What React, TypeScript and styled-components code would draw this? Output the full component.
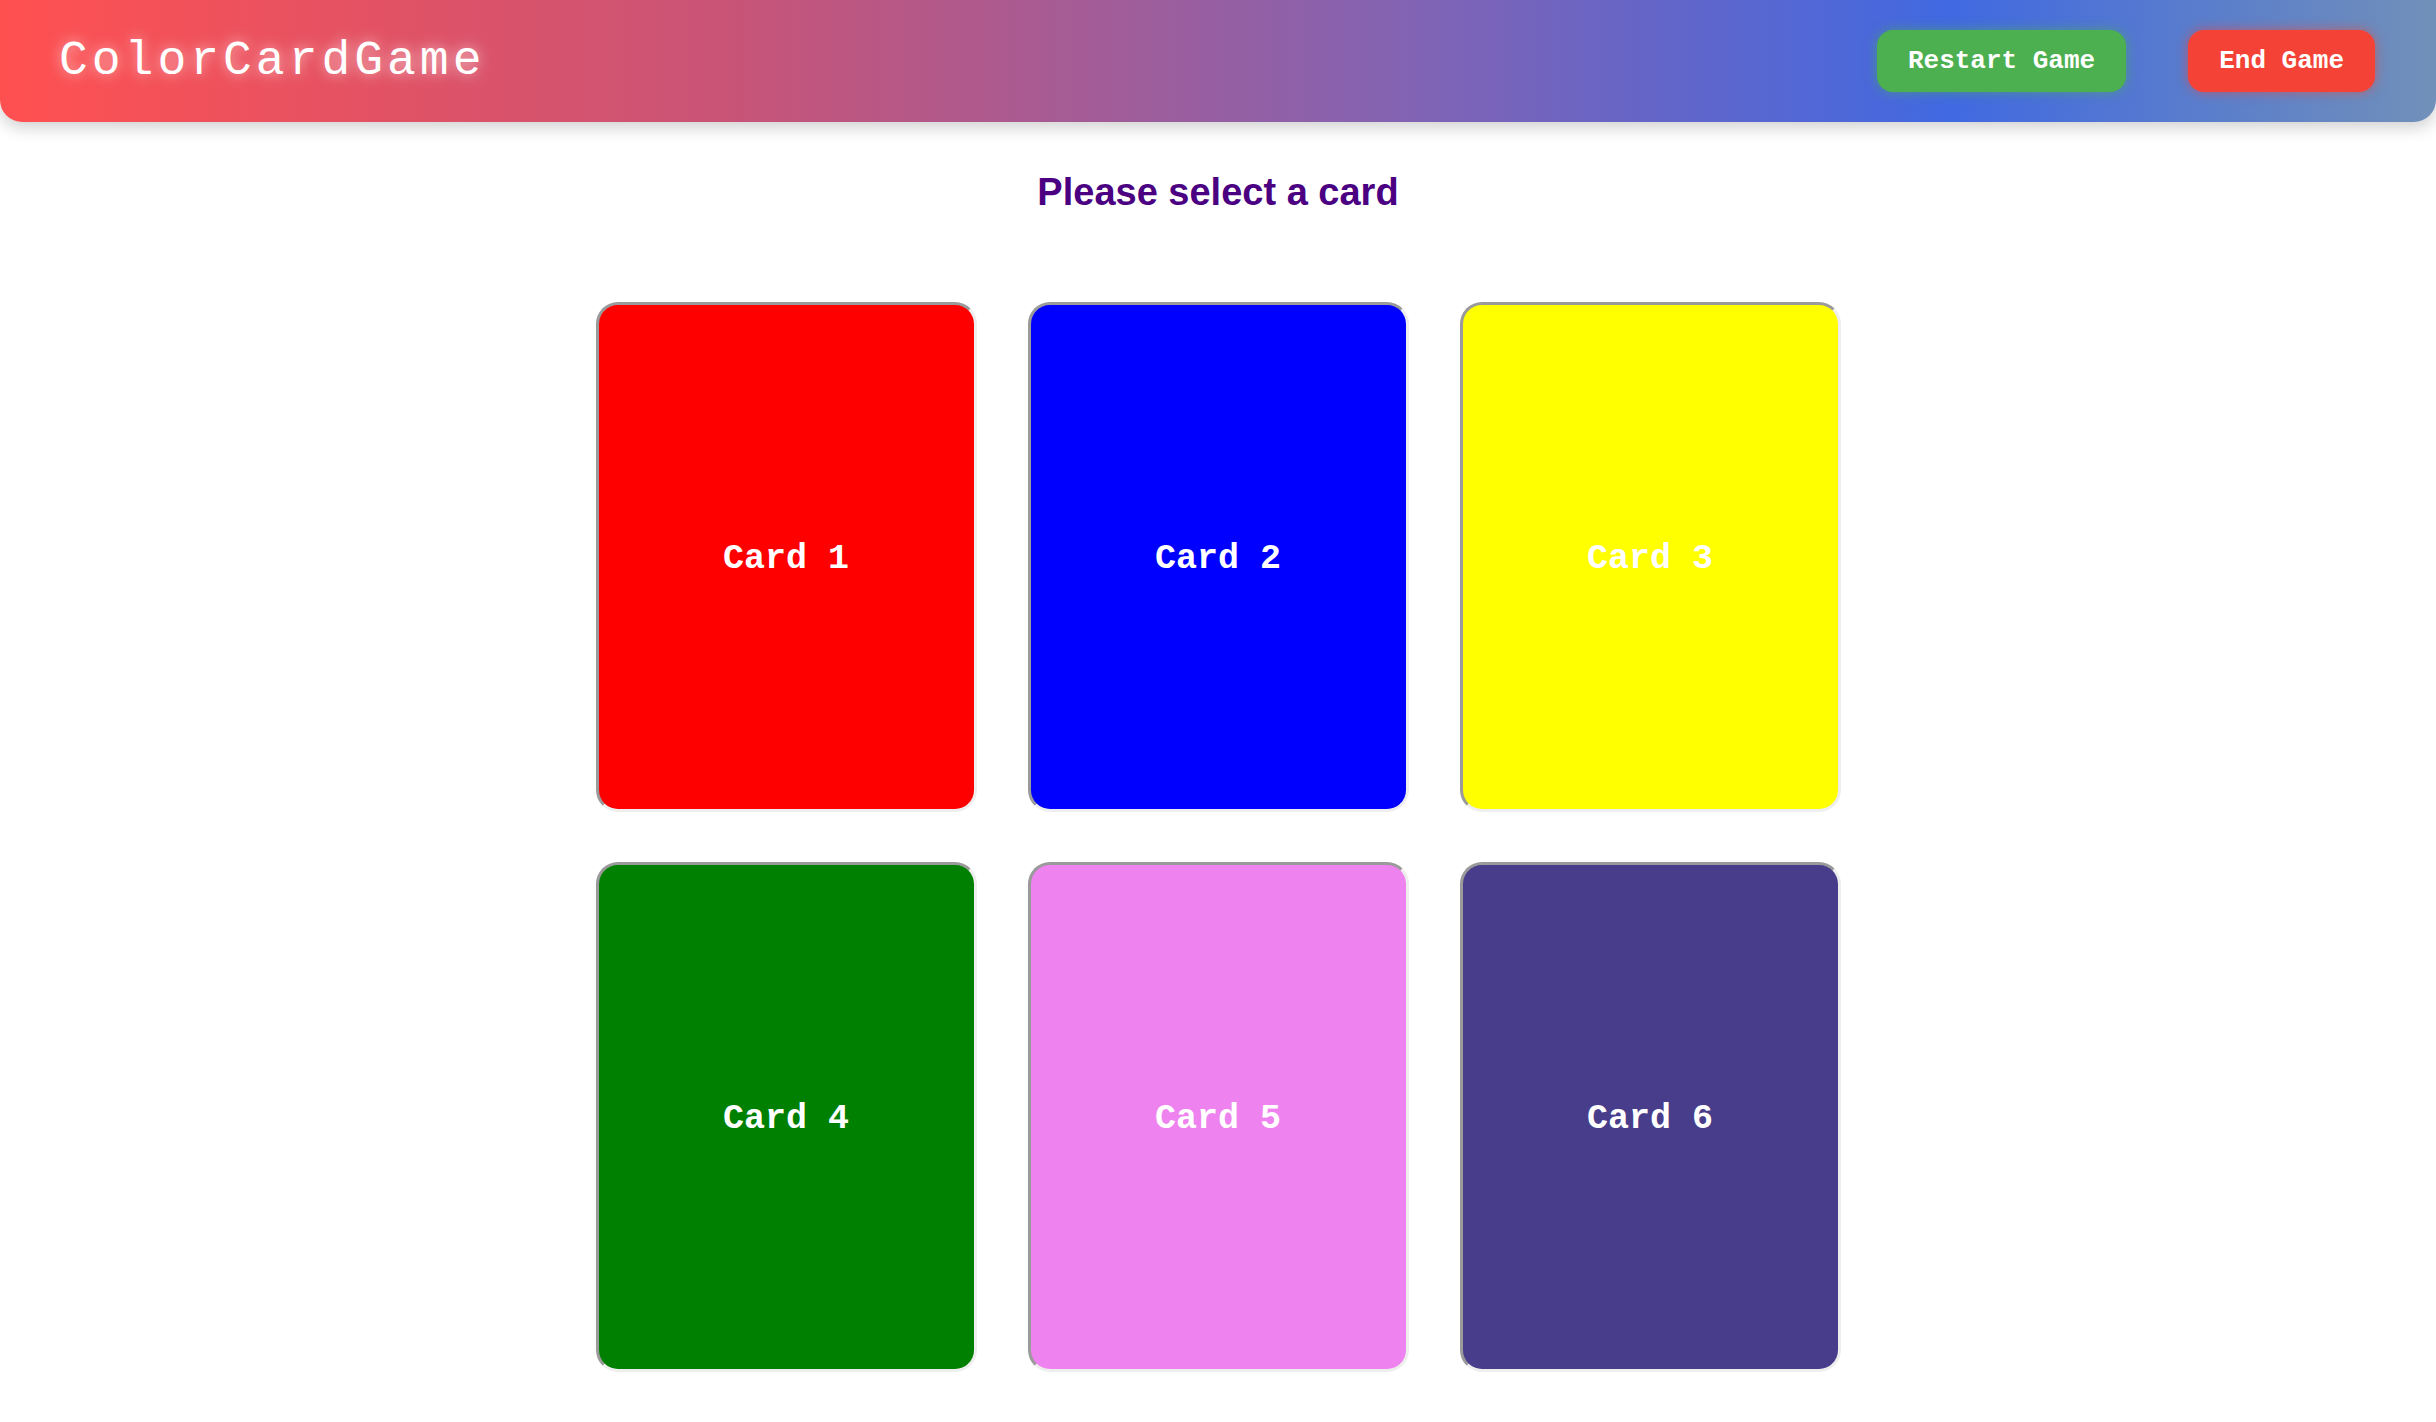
import React from "react";
import styled, { createGlobalStyle } from "styled-components";

const GlobalStyle = createGlobalStyle`
  html, body {
    margin: 0;
    padding: 0;
    background: #ffffff;
  }
  body {
    font-family: "Liberation Sans", Arial, sans-serif;
  }
`;

const Page = styled.div`
  min-height: 1422px;
  background: #ffffff;
`;

const Header = styled.header`
  height: 122px;
  box-sizing: border-box;
  display: flex;
  align-items: center;
  justify-content: space-between;
  padding: 0 61px 0 59px;
  background: linear-gradient(
    to right,
    #ff5050 0%,
    #c85477 30%,
    #8a62ad 55%,
    #4169e1 80%,
    #7190b9 100%
  );
  border-radius: 0 0 22px 22px;
  box-shadow: 0 6px 16px rgba(0, 0, 0, 0.18);
`;

const Logo = styled.h1`
  margin: 0;
  font-family: "Liberation Mono", "Courier New", monospace;
  font-weight: normal;
  font-size: 48px;
  letter-spacing: 4px;
  color: #ffffff;
  text-shadow: 0 0 14px rgba(255, 255, 255, 0.7);
`;

const Actions = styled.div`
  display: flex;
  align-items: center;
  gap: 62px;
`;

const ActionButton = styled.button<{ $bg: string; $glow: string }>`
  border: none;
  cursor: pointer;
  padding: 18px 31px;
  border-radius: 16px;
  font-family: "Liberation Mono", "Courier New", monospace;
  font-weight: bold;
  font-size: 26px;
  line-height: 26px;
  color: #ffffff;
  background: ${(p) => p.$bg};
  box-shadow: 0 0 12px ${(p) => p.$glow};
`;

const Prompt = styled.h2`
  margin: 49px 0 0;
  text-align: center;
  font-family: "Liberation Sans", Arial, sans-serif;
  font-weight: bold;
  font-size: 38px;
  color: #4b0082;
`;

const Grid = styled.div`
  margin: 88px auto 0;
  display: grid;
  grid-template-columns: repeat(3, 381px);
  column-gap: 51px;
  row-gap: 50px;
  justify-content: center;
`;

const Card = styled.div<{ $color: string }>`
  box-sizing: border-box;
  width: 381px;
  height: 510px;
  border: 3px inset #eeeeee;
  border-radius: 22px;
  background: ${(p) => p.$color};
  display: flex;
  align-items: center;
  justify-content: center;
  cursor: pointer;
`;

const CardLabel = styled.span`
  font-family: "Liberation Mono", "Courier New", monospace;
  font-weight: bold;
  font-size: 35px;
  color: #ffffff;
  transform: translateY(2px);
`;

const cards = [
  { id: 1, color: "#ff0000" },
  { id: 2, color: "#0000ff" },
  { id: 3, color: "#ffff00" },
  { id: 4, color: "#008000" },
  { id: 5, color: "#ee82ee" },
  { id: 6, color: "#483d8b" },
];

export default function App() {
  return (
    <Page>
      <GlobalStyle />
      <Header>
        <Logo>ColorCardGame</Logo>
        <Actions>
          <ActionButton $bg="#4caf50" $glow="rgba(76, 175, 80, 0.6)">
            Restart Game
          </ActionButton>
          <ActionButton $bg="#f44336" $glow="rgba(244, 67, 54, 0.6)">
            End Game
          </ActionButton>
        </Actions>
      </Header>
      <Prompt>Please select a card</Prompt>
      <Grid>
        {cards.map((c) => (
          <Card key={c.id} $color={c.color}>
            <CardLabel>Card {c.id}</CardLabel>
          </Card>
        ))}
      </Grid>
    </Page>
  );
}
